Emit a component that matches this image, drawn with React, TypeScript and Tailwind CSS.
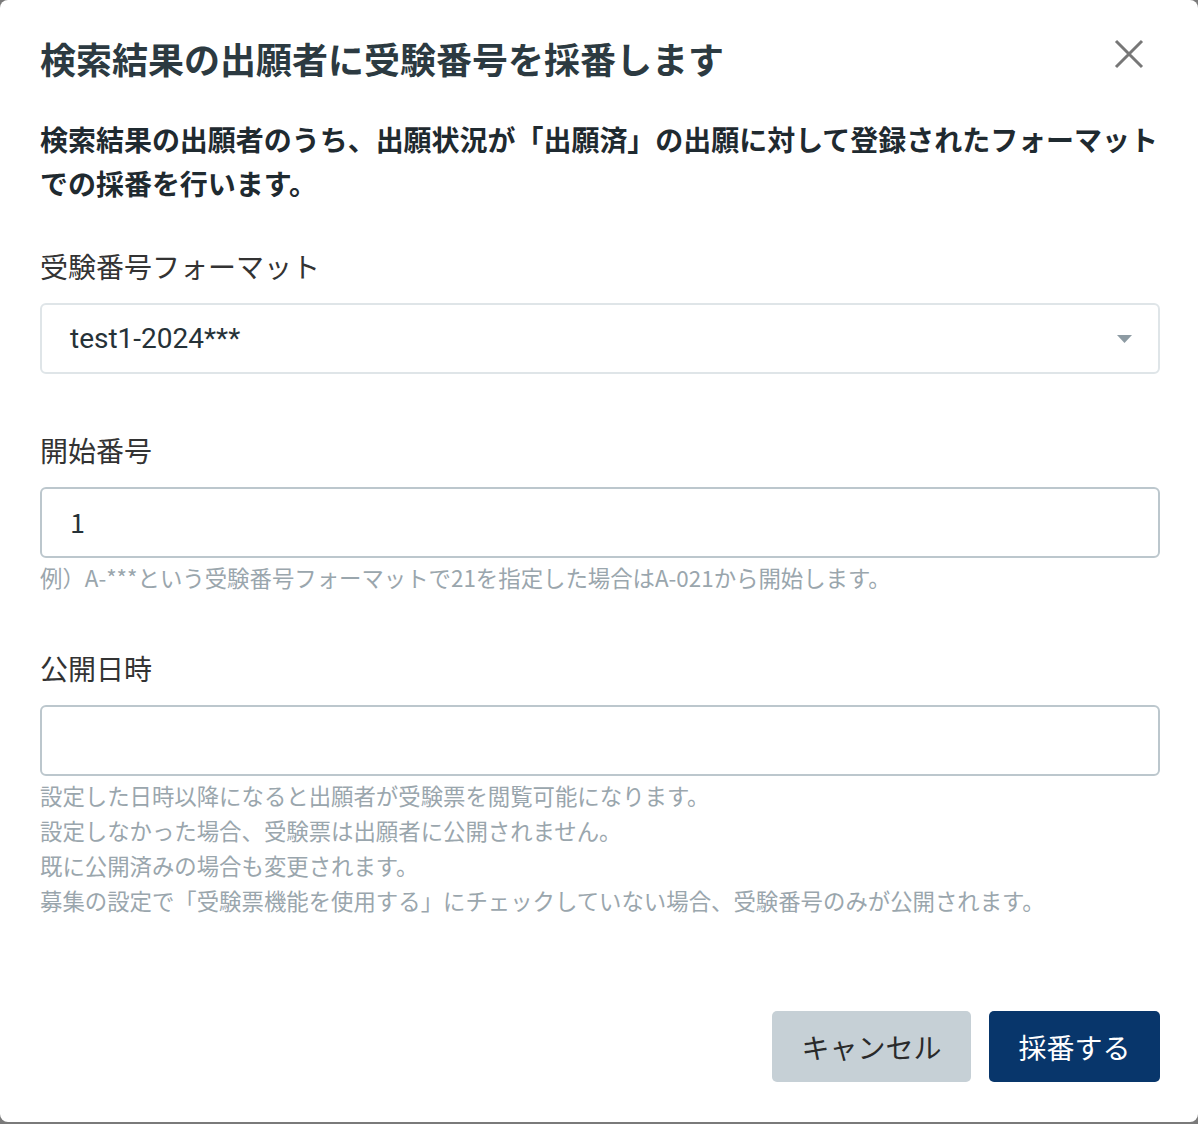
import React from "react";

const jp = { fontFamily: '"Noto Sans CJK JP", "Noto Sans", sans-serif' };

export default function App() {
    return (
        <div className="w-[1198px] h-[1124px] bg-[#7a7a7a]" style={jp}>
            <div className="w-[1198px] h-[1122px] bg-white rounded-[8px] flex flex-col pl-[40px] pr-[38px] pt-[36px] pb-[40px]">
                {/* ヘッダー */}
                <div className="flex items-center justify-between h-[44px]">
                    <h1 className="text-[36px] leading-[44px] font-bold text-[#2c3a41]">検索結果の出願者に受験番号を採番します</h1>
                    <button className="mr-[16px] -mt-[8px] w-[30px] h-[30px] flex items-center justify-center">
                        <svg width="30" height="30" viewBox="0 0 30 30">
                            <path d="M2 2 L28 28 M28 2 L2 28" stroke="#777" strokeWidth="3" />
                        </svg>
                    </button>
                </div>

                <p className="mt-[37px] text-[28px] leading-[44px] font-bold text-[#1f2a30] tracking-[-0.03px]">
                    検索結果の出願者のうち、出願状況が「出願済」の出願に対して登録されたフォーマットでの採番を行います。
                </p>

                {/* 受験番号フォーマット */}
                <label className="mt-[41px] text-[28px] leading-[40px] text-[#333]">受験番号フォーマット</label>
                <div className="mt-[17px] h-[71px] border-2 border-[#dfe5e8] rounded-[6px] flex items-center justify-between pl-[28px] pr-[26px]">
                    <span className="text-[28px] text-[#263238]" style={{ fontFamily: 'Roboto, "Noto Sans CJK JP", sans-serif' }}>test1-2024***</span>
                    <svg width="15" height="8" viewBox="0 0 15 8">
                        <path d="M0 0 L15 0 L7.5 8 Z" fill="#8d9ba3" />
                    </svg>
                </div>

                {/* 開始番号 */}
                <label className="mt-[56px] text-[28px] leading-[40px] text-[#333]">開始番号</label>
                <div className="mt-[17px] h-[71px] border-2 border-[#bcc7cd] rounded-[6px] flex items-center pl-[28px]">
                    <span className="text-[27px] text-[#263238]">1</span>
                </div>
                <p className="mt-[2px] text-[22.4px] leading-[35px] text-[#9aa6ad]">
                    例）A-***という受験番号フォーマットで21を指定した場合はA-021から開始します。
                </p>

                {/* 公開日時 */}
                <label className="mt-[53px] text-[28px] leading-[40px] text-[#333]">公開日時</label>
                <div className="mt-[17px] h-[71px] border-2 border-[#bcc7cd] rounded-[6px]"></div>
                <div className="mt-[2px] text-[22.4px] leading-[35px] text-[#9aa6ad]">
                    <p>設定した日時以降になると出願者が受験票を閲覧可能になります。</p>
                    <p>設定しなかった場合、受験票は出願者に公開されません。</p>
                    <p>既に公開済みの場合も変更されます。</p>
                    <p>募集の設定で「受験票機能を使用する」にチェックしていない場合、受験番号のみが公開されます。</p>
                </div>

                {/* ボタン */}
                <div className="mt-auto flex justify-end gap-[18px]">
                    <button className="w-[199px] h-[71px] rounded-[5px] bg-[#c6d0d6] text-[28px] text-[#2a2a2a]">キャンセル</button>
                    <button className="w-[171px] h-[71px] rounded-[5px] bg-[#08366b] text-[28px] text-white">採番する</button>
                </div>
            </div>
        </div>
    );
}
